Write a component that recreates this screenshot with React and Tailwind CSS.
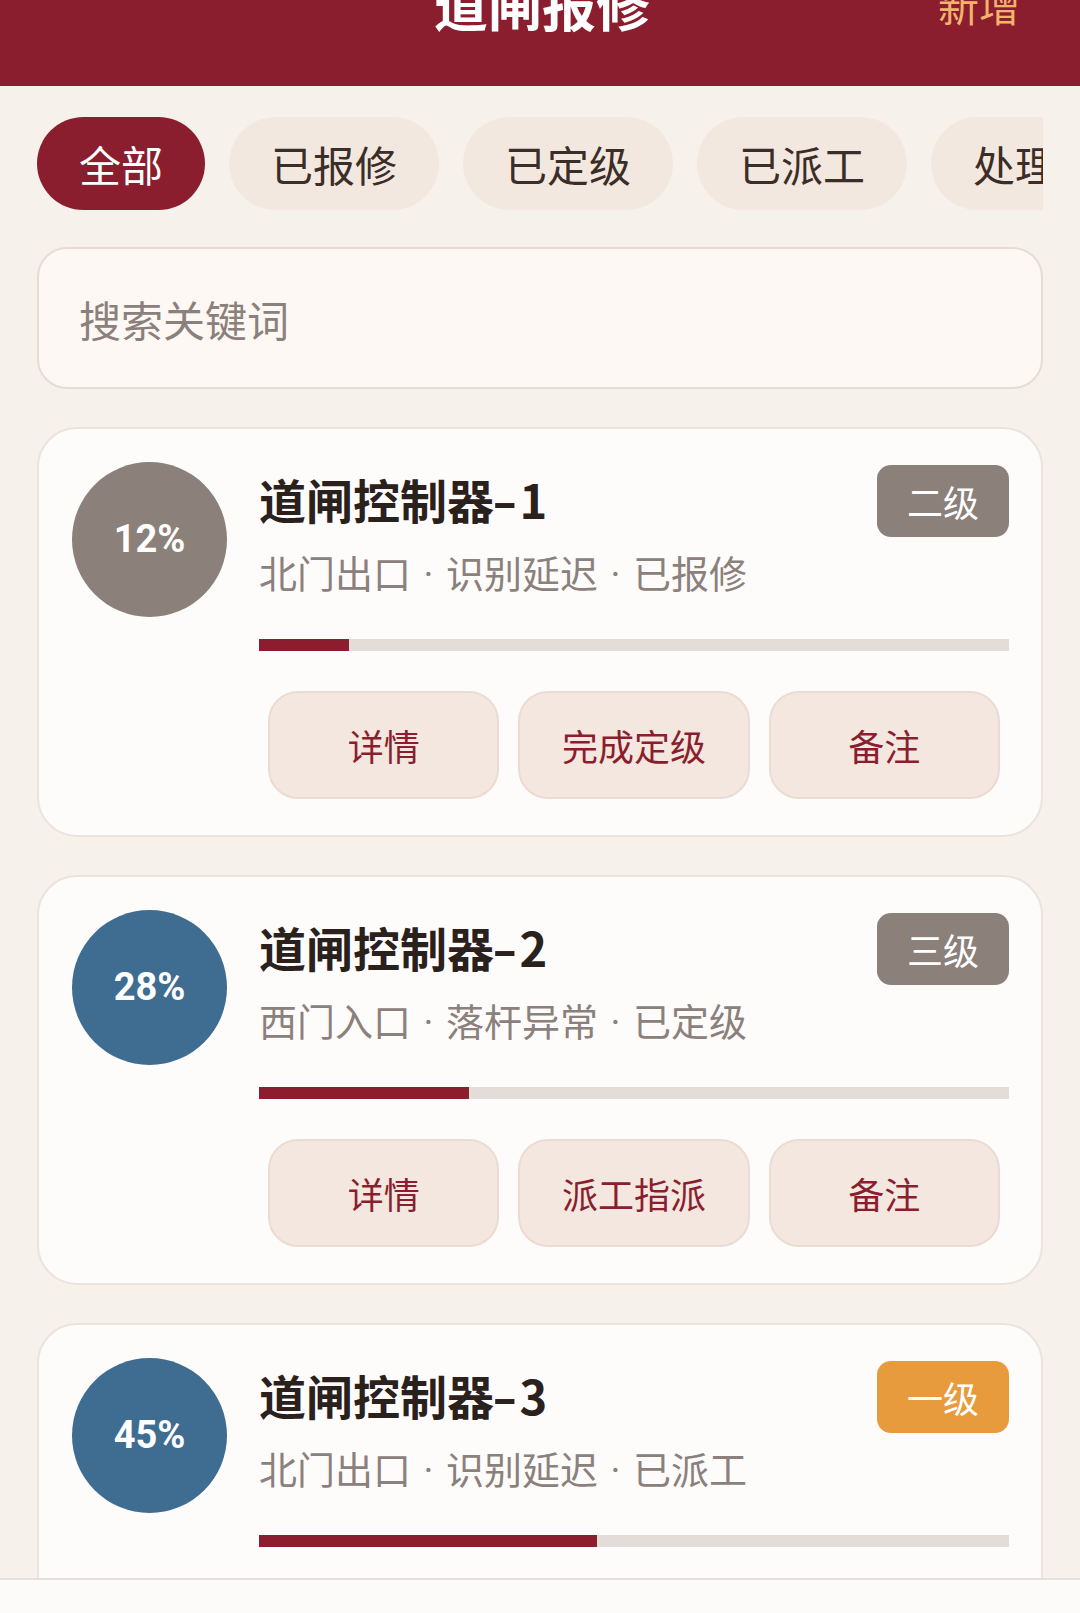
import React, { useState } from 'react';

const cjk = { fontFamily: '"Noto Sans CJK SC", "Noto Sans", sans-serif' };
const num = { fontFamily: 'Roboto, "Noto Sans", sans-serif' };

const tabs = ['全部', '已报修', '已定级', '已派工', '处理中'];

const tickets = [
  {
    id: 1,
    name: '道闸控制器',
    no: 1,
    place: '北门出口',
    fault: '识别延迟',
    status: '已报修',
    level: '二级',
    progress: 12,
    action: '完成定级',
  },
  {
    id: 2,
    name: '道闸控制器',
    no: 2,
    place: '西门入口',
    fault: '落杆异常',
    status: '已定级',
    level: '三级',
    progress: 28,
    action: '派工指派',
  },
  {
    id: 3,
    name: '道闸控制器',
    no: 3,
    place: '北门出口',
    fault: '识别延迟',
    status: '已派工',
    level: '一级',
    progress: 45,
    action: '完工确认',
  },
];

const Dot = () => (
  <span className="inline-block w-[35px] leading-[38px] text-center" style={num}>
    ·
  </span>
);

function TicketCard({ item }) {
  // 进度低于 20% 用灰色，其余用蓝色
  const circleColor = item.progress < 20 ? 'bg-[#8b807a]' : 'bg-[#3f6d91]';
  const badgeColor = item.level === '一级' ? 'bg-[#e89b3d]' : 'bg-[#8b807a]';

  return (
    <div className="shrink-0 rounded-[40px] border-2 border-[#ece4dc] bg-[#fefcfb] pl-[33px] pr-[32px] pt-[33px] pb-[36px] flex gap-[32px]">
      <div
        className={`w-[155px] h-[155px] shrink-0 rounded-full ${circleColor} flex items-center justify-center text-white text-[38px] font-bold`}
        style={num}
      >
        {item.progress}%
      </div>

      <div className="flex-1 flex flex-col">
        <div className="flex items-start justify-between">
          <div className="flex flex-col">
            <div className="mt-[9px] text-[47px] leading-[56px] font-bold text-[#2a211d]">
              {item.name}
              <span className="inline-block ml-[2px] mr-[6px] scale-x-[1.5]">-</span>
              {item.no}
            </div>
            <div className="mt-[21px] h-[48px] text-[38px] leading-[48px] text-[#8b807b] whitespace-nowrap">
              {item.place}
              <Dot />
              {item.fault}
              <Dot />
              {item.status}
            </div>
          </div>
          <div className={`mt-[3px] h-[72px] px-[30px] rounded-[14px] ${badgeColor} text-white text-[36px] flex items-center`}>
            {item.level}
          </div>
        </div>

        <div className="mt-[43px] h-[12px] bg-[#e2ddd8]">
          <div className="h-full bg-[#8b1e2e]" style={{ width: `${item.progress}%` }} />
        </div>

        <div className="mt-[40px] mx-[9px] grid grid-cols-3 gap-[19px]">
          {['详情', item.action, '备注'].map((label) => (
            <button
              key={label}
              className="h-[108px] rounded-[30px] border-2 border-[#ebdcd3] bg-[#f3e7e0] text-[36px] text-[#8b1e2e]"
            >
              {label}
            </button>
          ))}
        </div>
      </div>
    </div>
  );
}

export default function App() {
  const [active, setActive] = useState(0);
  const [keyword, setKeyword] = useState('');

  return (
    <div className="h-[1613px] w-full overflow-hidden flex flex-col bg-[#f7f1eb]" style={cjk}>
      {/* 顶部标题栏 */}
      <div className="h-[86px] shrink-0 overflow-hidden bg-[#8b1e2e]">
        <div className="-mt-[40px] h-[88px] pl-[64px] pr-[60px] grid grid-cols-[1fr_auto_1fr] items-center">
          <div />
          <div className="text-[54px] leading-none font-bold text-white">道闸报修</div>
          <div className="justify-self-end text-[41px] leading-none text-[#f2b46c]">新增</div>
        </div>
      </div>

      <div className="flex-1 overflow-hidden px-[37px] flex flex-col">
        {/* 状态筛选 */}
        <div className="mt-[31px] flex gap-[24px] overflow-hidden shrink-0">
          {tabs.map((t, i) => (
            <button
              key={t}
              onClick={() => setActive(i)}
              className={
                i === active
                  ? 'shrink-0 h-[93px] px-[42px] rounded-full bg-[#8b1e2e] text-white text-[42px]'
                  : 'shrink-0 h-[93px] px-[42px] rounded-full bg-[#f3e8e0] text-[#3b2d27] text-[42px]'
              }
            >
              {t}
            </button>
          ))}
        </div>

        {/* 搜索 */}
        <div className="mt-[37px] shrink-0 h-[142px] rounded-[30px] border-2 border-[#e6dcd4] bg-[#fdf8f3] flex items-center px-[40px]">
          <input
            value={keyword}
            onChange={(e) => setKeyword(e.target.value)}
            placeholder="搜索关键词"
            className="w-full bg-transparent outline-none text-[42px] text-[#3b2d27] placeholder:text-[#8b807b]"
            style={cjk}
          />
        </div>

        {/* 列表 */}
        <div className="mt-[38px] flex flex-col gap-[38px]">
          {tickets.map((item) => (
            <TicketCard key={item.id} item={item} />
          ))}
        </div>
      </div>

      {/* 底部栏 */}
      <div className="h-[35px] shrink-0 border-t-2 border-[#e6e0da] bg-[#fdfbf9]" />
    </div>
  );
}
